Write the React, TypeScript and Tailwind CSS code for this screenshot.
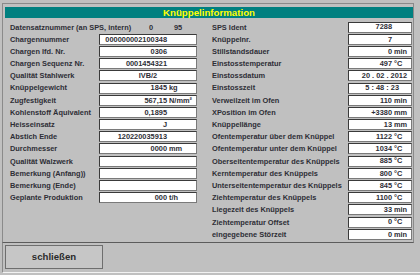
import React from "react";

type Row = { label: string; value?: string; unit?: string; center?: boolean; pr?: string };

const leftRows: Row[] = [
  { label: "Chargennummer", value: "000000002100348" },
  { label: "Chargen lfd. Nr.", value: "0306" },
  { label: "Chargen Sequenz Nr.", value: "0001454321" },
  { label: "Qualität Stahlwerk", value: "IVB/2", center: true },
  { label: "Knüppelgewicht", value: "1845", unit: "kg" },
  { label: "Zugfestigkeit", value: "567,15", unit: "N/mm²" },
  { label: "Kohlenstoff Äquivalent", value: "0,1895" },
  { label: "Heisseinsatz", value: "J" },
  { label: "Abstich Ende", value: "120220035913" },
  { label: "Durchmesser", value: "0000", unit: "mm" },
  { label: "Qualität Walzwerk" },
  { label: "Bemerkung (Anfang))" },
  { label: "Bemerkung (Ende)" },
  { label: "Geplante Produktion", value: "000", unit: "t/h" },
];

const rightRows: Row[] = [
  { label: "SPS Ident", value: "7288" },
  { label: "Knüppelnr.", value: "7" },
  { label: "Stillstandsdauer", value: "0", unit: "min" },
  { label: "Einstosstemperatur", value: "497", unit: "°C" },
  { label: "Einstossdatum", value: "20 . 02 . 2012", pr: "pr-[4px]" },
  { label: "Einstosszeit", value: "5 : 48 : 23", pr: "pr-[12px]" },
  { label: "Verweilzeit im Ofen", value: "110", unit: "min" },
  { label: "XPosition im Ofen", value: "+3380", unit: "mm" },
  { label: "Knüppellänge", value: "13", unit: "mm" },
  { label: "Ofentemperatur über dem Knüppel", value: "1122", unit: "°C" },
  { label: "Ofentemperatur unter dem Knüppel", value: "1034", unit: "°C" },
  { label: "Oberseitentemperatur des Knüppels", value: "885", unit: "°C" },
  { label: "Kerntemperatur des Knüppels", value: "800", unit: "°C" },
  { label: "Unterseitentemperatur des Knüppels", value: "845", unit: "°C" },
  { label: "Ziehtemperatur des Knüppels", value: "1100", unit: "°C" },
  { label: "Liegezeit des Knüppels", value: "33", unit: "min" },
  { label: "Ziehtemperatur Offset", value: "0", unit: "°C" },
  { label: "eingegebene Störzeit", value: "0", unit: "min" },
];

function ValueBox({ row, side }: { row: Row; side: "left" | "right" }) {
  const wide = side === "left";
  return (
    <div
      className={`${wide ? "w-[98px]" : "w-[64px]"} h-[11px] bg-white border border-t-[#3a3a3a] border-l-[#3a3a3a] border-r-[#7a7a7a] border-b-[#7a7a7a] flex items-center leading-none`}
    >
      {row.value === undefined ? null : row.center ? (
        <span className="w-full text-center">{row.value}</span>
      ) : row.pr ? (
        <span className={`w-full text-right ${row.pr}`}>{row.value}</span>
      ) : (
        <>
          <span className={`${wide ? "w-[67px]" : "w-[43px]"} shrink-0 text-right`}>{row.value}</span>
          {row.unit && <span className="pl-[2px] whitespace-nowrap">{row.unit}</span>}
        </>
      )}
    </div>
  );
}

export default function App() {
  return (
    <div className="w-[420px] h-[275px] bg-[#c0c0c0] pt-[3px] pl-[2px] font-['Liberation_Sans',Arial,sans-serif] text-[#2e2e36] font-bold text-[7.4px] overflow-hidden">
      {/* Hauptbereich */}
      <div className="w-[412px] h-[240px] border-l border-t border-r border-[#8a8a8a] border-b border-b-[#5c5c5c]">
        <div className="ml-[2px] mt-[3px] h-[11px] bg-[#008080] flex items-center justify-center">
          <span className="text-[#ffff00] text-[9.7px] leading-none">Knüppelinformation</span>
        </div>

        <div className="flex mt-[3px]">
          {/* links */}
          <div className="ml-[7px] w-[190px] flex flex-col">
            <div className="h-[12.2px] flex items-center">
              <span className="w-[139px]">Datensatznummer (an SPS, intern)</span>
              <span className="w-[25px]">0</span>
              <span>95</span>
            </div>
            {leftRows.map((r) => (
              <div key={r.label} className="h-[12.2px] flex items-center">
                <span className="w-[89px] whitespace-nowrap">{r.label}</span>
                <ValueBox row={r} side="left" />
              </div>
            ))}
          </div>

          {/* rechts */}
          <div className="ml-[12px] w-[200px] flex flex-col">
            {rightRows.map((r) => (
              <div key={r.label} className="h-[12.2px] flex items-center">
                <span className="w-[136px] whitespace-nowrap">{r.label}</span>
                <ValueBox row={r} side="right" />
              </div>
            ))}
          </div>
        </div>
      </div>

      {/* Buttonleiste */}
      <div className="h-[30px] border-l border-[#8a8a8a] border-b border-b-[#f2f2f2] pl-[2px] pt-[2px]">
        <button className="w-[98px] h-[24px] bg-[#c6c6c6] border border-[#6e6e6e] text-[9.6px] text-[#2a2a2a] font-bold flex items-center justify-center">
          schließen
        </button>
      </div>
    </div>
  );
}
